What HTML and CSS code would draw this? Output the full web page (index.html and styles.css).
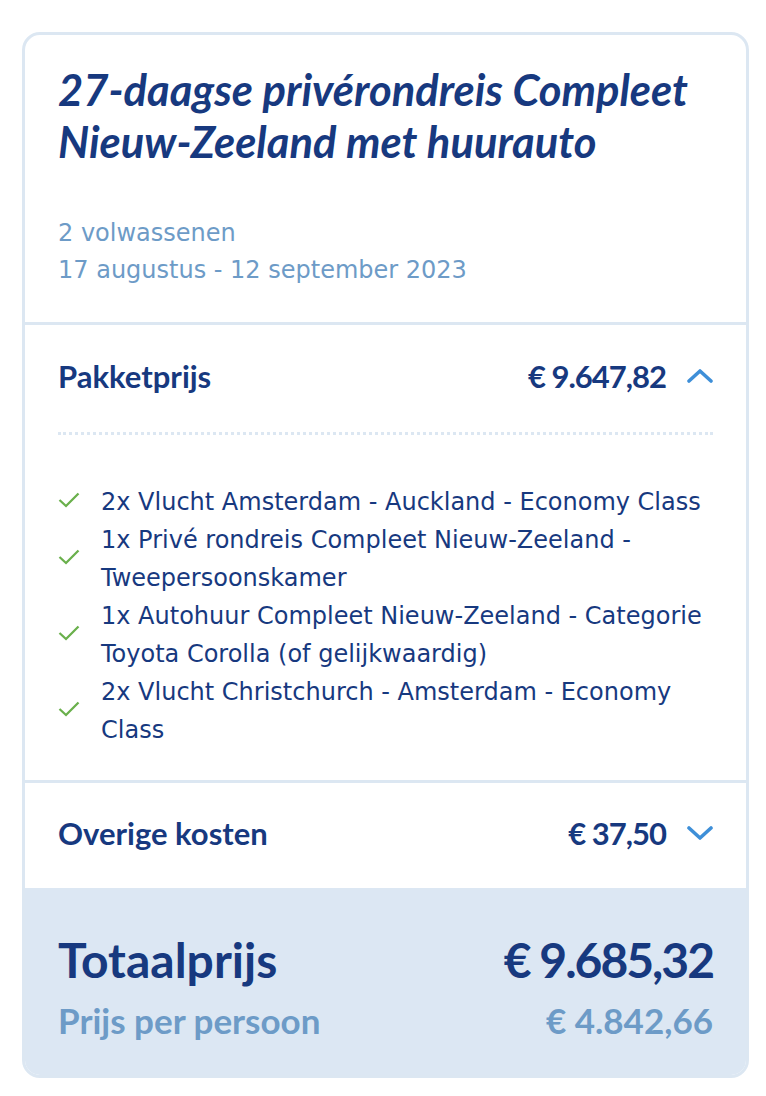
FILE: index.html
```html
<!DOCTYPE html>
<html lang="nl">
<head>
    <meta charset="UTF-8">
    <meta name="viewport" content="width=device-width, initial-scale=1.0">
    <title>Reisoverzicht</title>
    <link rel="stylesheet" href="styles.css">
</head>
<body>
    <div class="card">
        <div class="trip">
            <h1>27-daagse privérondreis Compleet Nieuw-Zeeland met huurauto</h1>
            <div class="meta">
                <div>2 volwassenen</div>
                <div>17 augustus - 12 september 2023</div>
            </div>
        </div>

        <div class="block">
            <div class="row">
                <span class="label">Pakketprijs</span>
                <span class="amount"><span class="price">€ 9.647,82</span>
                    <svg class="chev" width="26" height="16" viewBox="0 0 26 16"><path d="M2 13 L13 3 L24 13" fill="none" stroke="#3e8fd8" stroke-width="3.6" stroke-linecap="round" stroke-linejoin="round"/></svg>
                </span>
            </div>
            <ul class="items">
                <li><svg class="check" width="22" height="16" viewBox="0 0 22 16"><path d="M1.5 8 L8 14 L20.5 1.5" fill="none" stroke="#6ab04c" stroke-width="2.3"/></svg><span>2x Vlucht Amsterdam - Auckland - Economy Class</span></li>
                <li><svg class="check" width="22" height="16" viewBox="0 0 22 16"><path d="M1.5 8 L8 14 L20.5 1.5" fill="none" stroke="#6ab04c" stroke-width="2.3"/></svg><span>1x Privé rondreis Compleet Nieuw-Zeeland - Tweepersoonskamer</span></li>
                <li><svg class="check" width="22" height="16" viewBox="0 0 22 16"><path d="M1.5 8 L8 14 L20.5 1.5" fill="none" stroke="#6ab04c" stroke-width="2.3"/></svg><span>1x Autohuur Compleet Nieuw-Zeeland - Categorie Toyota Corolla (of gelijkwaardig)</span></li>
                <li><svg class="check" width="22" height="16" viewBox="0 0 22 16"><path d="M1.5 8 L8 14 L20.5 1.5" fill="none" stroke="#6ab04c" stroke-width="2.3"/></svg><span>2x Vlucht Christchurch - Amsterdam - Economy Class</span></li>
            </ul>
        </div>

        <div class="block other">
            <div class="row">
                <span class="label">Overige kosten</span>
                <span class="amount"><span class="price">€ 37,50</span>
                    <svg class="chev" width="26" height="16" viewBox="0 0 26 16"><path d="M2 3 L13 13 L24 3" fill="none" stroke="#3e8fd8" stroke-width="3.6" stroke-linecap="round" stroke-linejoin="round"/></svg>
                </span>
            </div>
        </div>

        <div class="total">
            <div class="total-row">
                <span>Totaalprijs</span>
                <span class="sum">€ 9.685,32</span>
            </div>
            <div class="pp-row">
                <span>Prijs per persoon</span>
                <span>€ 4.842,66</span>
            </div>
        </div>
    </div>
</body>
</html>
```

FILE: styles.css
```css
body { margin: 0; padding: 32px 17px 18px 22px; background: #fff; font-family: "DejaVu Sans", Verdana, sans-serif; color: #17397f; }
.card { border: 3px solid #dce7f2; border-radius: 18px; overflow: hidden; background: #fff; }
.trip { padding: 28px 33px 33px; border-bottom: 3px solid #dce7f2; }
h1 { margin: 0; font-family: Lato, sans-serif; font-style: italic; font-weight: 700; font-size: 43.5px; line-height: 52px; color: #17397f; }
.meta { margin-top: 48px; font-size: 24px; line-height: 37px; color: #6d9bc7; }
.block { padding: 32px 33px 31px; border-bottom: 3px solid #dce7f2; }
.row { display: flex; justify-content: space-between; align-items: center; font-family: Lato, sans-serif; font-weight: 700; font-size: 31px; line-height: 38px; }
.price { letter-spacing: -1px; }
.amount { display: flex; align-items: center; gap: 21px; }
.chev { display: block; }
.items { list-style: none; margin: 37px 0 0; padding: 48px 0 0; border-top: 3px dotted #dce7f2; }
.items li { display: flex; align-items: center; gap: 21px; font-size: 24px; line-height: 38px; }
.check { flex: none; margin-top: -4px; }
.other { border-bottom: none; padding: 31px 33px 36px; }
.total { background: #dce7f3; padding: 44px 33px 34px; font-family: Lato, sans-serif; font-weight: 700; }
.total-row { display: flex; justify-content: space-between; font-size: 48px; line-height: 56px; }
.sum { letter-spacing: -2px; }
.pp-row { display: flex; justify-content: space-between; margin-top: 11px; font-size: 35px; line-height: 42px; color: #6d9bc7; }
```
